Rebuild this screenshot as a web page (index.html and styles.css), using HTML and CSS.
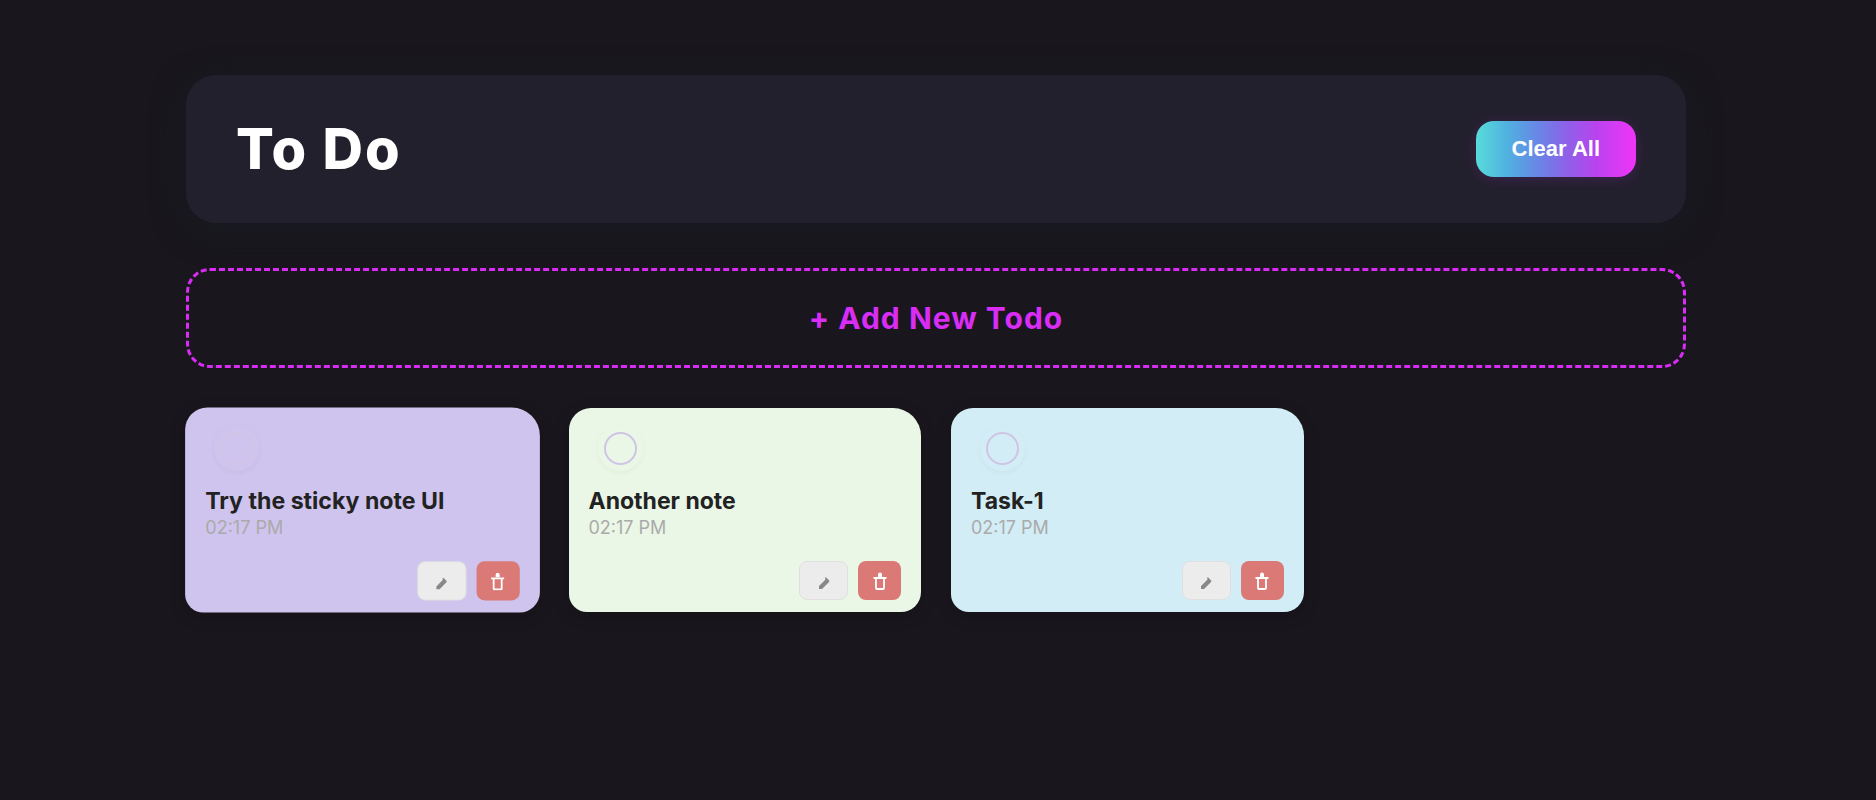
FILE: index.html
```html
<!DOCTYPE html>
<html lang="en">
<head>
<meta charset="utf-8">
<meta name="viewport" content="width=device-width, initial-scale=1">
<title>To Do</title>
<link rel="stylesheet" href="styles.css">
</head>
<body>
<svg class="sprite" aria-hidden="true">
  <symbol id="pencil" viewBox="0 0 12 12"><path d="M1 12V9L7.500 2.500 10.500 5.500 4 12ZM7 .8 8 .3 11.200 3.600V5L10.500 5.500 7.500 2.500Z"/></symbol>
  <symbol id="trash" viewBox="0 0 14 18"><path d="M5 5V2.500Q5 .5 7 .5T9 2.500V5Z" fill="currentColor"/><path d="M.5 6h13M3 6v10q0 1 1 1h6q1 0 1-1V6" fill="none" stroke="currentColor" stroke-width="1.800"/></symbol>
</svg>
<main class="app">
  <header class="header">
    <h1 class="title">To Do</h1>
    <button class="clear" type="button">Clear All</button>
  </header>
  <button class="add" type="button">+ Add New Todo</button>
  <ul class="notes">
    <li class="note note-purple note-active">
      <input class="check" type="checkbox" aria-labelledby="note-1">
      <h2 class="text" id="note-1">Try the sticky note UI</h2>
      <time class="time">02:17 PM</time>
      <div class="actions">
        <button class="edit" type="button" aria-label="Edit"><svg class="icon-edit"><use href="#pencil"/></svg></button>
        <button class="delete" type="button" aria-label="Delete"><svg class="icon-delete"><use href="#trash"/></svg></button>
      </div>
    </li>
    <li class="note note-green">
      <input class="check" type="checkbox" aria-labelledby="note-2">
      <h2 class="text" id="note-2">Another note</h2>
      <time class="time">02:17 PM</time>
      <div class="actions">
        <button class="edit" type="button" aria-label="Edit"><svg class="icon-edit"><use href="#pencil"/></svg></button>
        <button class="delete" type="button" aria-label="Delete"><svg class="icon-delete"><use href="#trash"/></svg></button>
      </div>
    </li>
    <li class="note note-blue">
      <input class="check" type="checkbox" aria-labelledby="note-3">
      <h2 class="text" id="note-3">Task-1</h2>
      <time class="time">02:17 PM</time>
      <div class="actions">
        <button class="edit" type="button" aria-label="Edit"><svg class="icon-edit"><use href="#pencil"/></svg></button>
        <button class="delete" type="button" aria-label="Delete"><svg class="icon-delete"><use href="#trash"/></svg></button>
      </div>
    </li>
  </ul>
</main>
</body>
</html>
```
FILE: styles.css
```css
* { box-sizing: border-box; }
body {
  margin: 0;
  padding: 75px 4px 0 0;
  min-height: 100vh;
  background: #19171d;
  font-family: Inter, sans-serif;
}
button { font: inherit; cursor: pointer; }
.sprite { display: none; }
.app { width: 90%; max-width: 1500px; margin: 0 auto; }
.header {
  display: flex;
  align-items: center;
  justify-content: space-between;
  padding: 40px 50px;
  border-radius: 30px;
  background: #23202e;
  box-shadow: 0 8px 32px rgba(24, 26, 34, .8);
}
.title {
  margin: 0;
  color: #fff;
  font-size: 56px;
  line-height: 68px;
  font-weight: 800;
  letter-spacing: 2px;
}
.clear {
  padding: 15px 36px;
  border: 0;
  border-radius: 18px;
  background: linear-gradient(90deg, #57dcda, #50b0e0 20%, #6a84e6 40%, #8c62e9 56%, #b943ee 75%, #f035f8);
  box-shadow: 0 2px 12px rgba(214, 51, 255, .15);
  color: #fff;
  font: 700 22px/26px "Liberation Sans", Arial, sans-serif;
}
.add {
  display: block;
  width: 100%;
  margin-top: 45px;
  padding: 29px;
  border: 3px dashed #d92cf5;
  border-radius: 24px;
  background: none;
  color: #d92cf5;
  font-size: 30px;
  line-height: 36px;
  font-weight: 700;
  letter-spacing: 1px;
}
.notes {
  display: grid;
  grid-template-columns: repeat(auto-fill, minmax(320px, 1fr));
  gap: 30px;
  margin: 40px 0 0;
  padding: 0;
  list-style: none;
}
.note {
  display: flex;
  flex-direction: column;
  padding: 18px 20px 12px;
  border-radius: 22px 28px 20px 18px;
  box-shadow: 0 4px 16px rgba(0, 0, 0, .18);
}
.note-purple { background: #cfc4ed; }
.note-green { background: #eaf7e6; }
.note-blue { background: #d3edf6; }
.note-active { transform: scale(1.005); }
.check {
  appearance: none;
  width: 45px;
  height: 45px;
  margin: 0 0 0 9px;
  border-radius: 50%;
  background: radial-gradient(circle, transparent 14px, #cfc4e6 15px, #cfc4e6 16px, transparent 17px);
  box-shadow: 0 2px 6px rgba(0, 0, 0, .04);
}
.text {
  margin: 15px 0 0;
  color: #222;
  font-size: 23px;
  line-height: 30px;
  font-weight: 700;
}
.time { color: #aaa; font-size: 18px; line-height: 24px; }
.actions { display: flex; justify-content: flex-end; gap: 10px; margin-top: 21px; }
.edit, .delete {
  display: flex;
  align-items: center;
  justify-content: center;
  height: 39px;
  padding: 0;
  border-radius: 8px;
}
.edit { width: 49px; padding-top: 4px; border: 1px solid #e0e0e0; background: #ececec; color: #888; }
.delete { width: 43px; border: 0; background: #da7975; color: #fff; }
.icon-edit { width: 12px; height: 12px; fill: currentColor; }
.icon-delete { width: 14px; height: 18px; }
```
